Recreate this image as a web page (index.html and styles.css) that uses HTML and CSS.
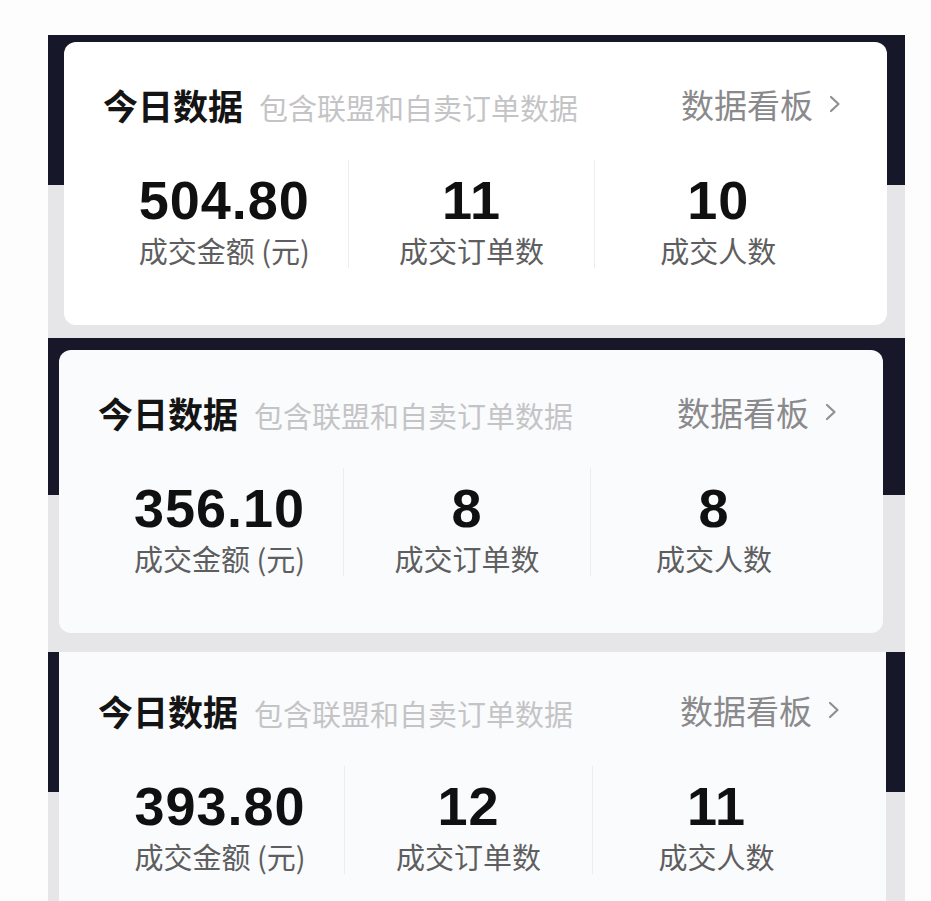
FILE: index.html
```html
<!DOCTYPE html>
<html lang="zh-CN">

<head>
    <meta charset="UTF-8">
    <meta name="viewport" content="width=device-width, initial-scale=1.0">
    <title>今日数据</title>
    <link rel="stylesheet" href="styles.css">
</head>

<body>
    <div class="page">

        <div class="strip strip-one">
            <div class="card">
                <div class="card-head">
                    <div class="head-left">
                        <span class="title">今日数据</span>
                        <span class="subtitle">包含联盟和自卖订单数据</span>
                    </div>
                    <a class="board-link" href="#">数据看板
                        <svg class="chevron" viewBox="0 0 12 18" width="12" height="18"><path d="M2 2 L9.5 9 L2 16" /></svg>
                    </a>
                </div>
                <div class="stats">
                    <div class="stat">
                        <div class="stat-value">504.80</div>
                        <div class="stat-label">成交金额 (元)</div>
                    </div>
                    <div class="stat">
                        <div class="stat-value">11</div>
                        <div class="stat-label">成交订单数</div>
                    </div>
                    <div class="stat">
                        <div class="stat-value">10</div>
                        <div class="stat-label">成交人数</div>
                    </div>
                </div>
            </div>
        </div>

        <div class="strip strip-two">
            <div class="card card-soft">
                <div class="card-head">
                    <div class="head-left">
                        <span class="title">今日数据</span>
                        <span class="subtitle">包含联盟和自卖订单数据</span>
                    </div>
                    <a class="board-link" href="#">数据看板
                        <svg class="chevron" viewBox="0 0 12 18" width="12" height="18"><path d="M2 2 L9.5 9 L2 16" /></svg>
                    </a>
                </div>
                <div class="stats">
                    <div class="stat">
                        <div class="stat-value">356.10</div>
                        <div class="stat-label">成交金额 (元)</div>
                    </div>
                    <div class="stat">
                        <div class="stat-value">8</div>
                        <div class="stat-label">成交订单数</div>
                    </div>
                    <div class="stat">
                        <div class="stat-value">8</div>
                        <div class="stat-label">成交人数</div>
                    </div>
                </div>
            </div>
        </div>

        <div class="strip strip-three">
            <div class="card card-soft card-cut">
                <div class="card-head">
                    <div class="head-left">
                        <span class="title">今日数据</span>
                        <span class="subtitle">包含联盟和自卖订单数据</span>
                    </div>
                    <a class="board-link" href="#">数据看板
                        <svg class="chevron" viewBox="0 0 12 18" width="12" height="18"><path d="M2 2 L9.5 9 L2 16" /></svg>
                    </a>
                </div>
                <div class="stats">
                    <div class="stat">
                        <div class="stat-value">393.80</div>
                        <div class="stat-label">成交金额 (元)</div>
                    </div>
                    <div class="stat">
                        <div class="stat-value">12</div>
                        <div class="stat-label">成交订单数</div>
                    </div>
                    <div class="stat">
                        <div class="stat-value">11</div>
                        <div class="stat-label">成交人数</div>
                    </div>
                </div>
            </div>
        </div>

    </div>
</body>

</html>
```

FILE: styles.css
```css
body {
    margin: 0;
    height: 901px;
    overflow: hidden;
    background-color: #fdfdfd;
    font-family: "Noto Sans CJK SC", "Noto Sans", sans-serif;
}

.page {
    width: 857px;
    padding: 35px 0 0 48px;
}

.strip {
    display: flex;
    flex-direction: column;
}

.strip-one {
    height: 303px;
    background: linear-gradient(to bottom, #17172a 0, #17172a 150px, #e6e6e8 150px);
}

.strip-one .card {
    margin: 7px 18px 0 16px;
}

.strip-two {
    height: 314px;
    background: linear-gradient(to bottom, #17172a 0, #17172a 157px, #e6e6e8 157px);
}

.strip-two .card {
    margin: 12px 22px 0 11px;
}

.strip-three {
    height: 260px;
    background: linear-gradient(to bottom, #17172a 0, #17172a 140px, #e6e6e8 140px);
}

.strip-three .card {
    margin: 0 19px 0 11px;
}

.card {
    height: 283px;
    box-sizing: border-box;
    padding: 37px 46px 0 37px;
    background-color: #ffffff;
    border-radius: 12px;
}

.card-soft {
    background-color: #fafbfc;
}

.card-cut {
    height: 260px;
    padding-top: 33px;
    border-radius: 0;
}

.card-head {
    display: flex;
    justify-content: space-between;
    align-items: center;
    height: 50px;
}

.head-left {
    display: flex;
    align-items: baseline;
    gap: 16px;
}

.title {
    font-size: 35px;
    font-weight: 700;
    color: #141414;
    padding-left: 2px;
}

.subtitle {
    font-size: 29px;
    color: #c4c4c6;
}

.board-link {
    display: flex;
    align-items: center;
    gap: 16px;
    font-size: 33px;
    color: #8a8a8c;
    text-decoration: none;
}

.chevron {
    fill: none;
    stroke: #909092;
    stroke-width: 2.2;
    stroke-linecap: round;
    stroke-linejoin: round;
}

.stats {
    display: grid;
    grid-template-columns: repeat(3, 1fr);
    margin-top: 31px;
}

.stat {
    height: 108px;
    display: flex;
    flex-direction: column;
    align-items: center;
}

.stat + .stat {
    border-left: 1px solid #ededee;
}

.stat-value {
    margin-top: 12px;
    font-family: "Liberation Sans", Arial, sans-serif;
    font-size: 54px;
    font-weight: 700;
    letter-spacing: 1px;
    line-height: 56px;
    color: #101010;
}

.stat-label {
    font-size: 29px;
    line-height: 44px;
    color: #5e5e60;
}
```
